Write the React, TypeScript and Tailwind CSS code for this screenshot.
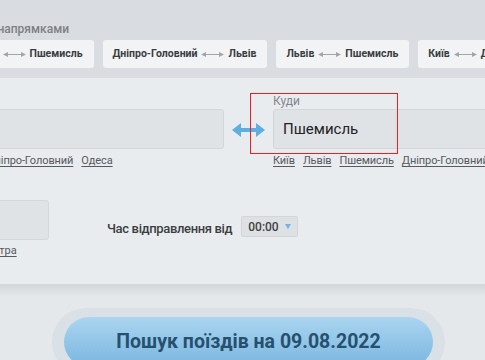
import React from "react";

const popular = [
  ["Київ", "Пшемисль"],
  ["Дніпро-Головний", "Львів"],
  ["Львів", "Пшемисль"],
  ["Київ", "Дніпро-Головний"],
];

const fromLinks = ["Київ", "Львів", "Дніпро-Головний", "Одеса"];
const toLinks = ["Київ", "Львів", "Пшемисль", "Дніпро-Головний"];

function ThinArrows() {
  return (
    <svg width="23" height="7" viewBox="0 0 23 7" className="shrink-0">
      <line x1="3" y1="3.5" x2="20" y2="3.5" stroke="#a3a6a9" strokeWidth="1" />
      <polygon points="0,3.5 5,1 5,6" fill="#a3a6a9" />
      <polygon points="23,3.5 18,1 18,6" fill="#a3a6a9" />
    </svg>
  );
}

function SwapArrows() {
  return (
    <svg width="33" height="14" viewBox="0 0 33 14">
      <rect x="7" y="5" width="19" height="4" fill="#5eaee0" />
      <polygon points="0,7 9,0 9,14" fill="#5eaee0" />
      <polygon points="33,7 24,0 24,14" fill="#5eaee0" />
    </svg>
  );
}

function CityLinks({ items }: { items: string[] }) {
  return (
    <div className="mt-[4px] flex gap-[8px] text-[11px] leading-[16px] tracking-[-0.1px] text-[#555a5e] whitespace-nowrap">
      {items.map((c) => (
        <a key={c} className="underline underline-offset-2">{c}</a>
      ))}
    </div>
  );
}

export default function App() {
  return (
    <div className="relative w-[485px] h-[360px] overflow-hidden bg-[#e5e8eb] font-['Roboto','Liberation_Sans',sans-serif]">
      {/* Popular routes */}
      <section className="h-[78px] bg-[#d9dce0] pt-[21px] whitespace-nowrap">
        <p className="-ml-[181px] w-[250px] text-right text-[12px] leading-[16px] font-medium text-[#7d8084]">
          Популярні за напрямками
        </p>
        <div className="mt-[3px] -ml-[33px] flex gap-[9px]">
          {popular.map(([a, b]) => (
            <div
              key={a + b}
              className="h-[28px] shrink-0 flex items-center gap-[4px] rounded-[3px] bg-[#f1f3f5] pl-[10px] pr-[11px] text-[10.5px] font-bold text-[#3a3d40]"
            >
              <span>{a}</span>
              <ThinArrows />
              <span>{b}</span>
            </div>
          ))}
        </div>
      </section>

      {/* Search form */}
      <section className="h-[206px] bg-[#e9ecef] pt-[16px] whitespace-nowrap">
        <div className="flex items-start">
          <div className="-ml-[80px] w-[304px] shrink-0">
            <p className="text-[12px] leading-[14px] text-[#85888b]">Звідки</p>
            <div className="mt-[1px] h-[40px] rounded-[3px] border border-[#d4d7da] bg-[#e0e3e6]" />
            <CityLinks items={fromLinks} />
          </div>
          <div className="w-[49px] shrink-0 flex justify-center pt-[29px]">
            <SwapArrows />
          </div>
          <div className="w-[260px] shrink-0">
            <p className="text-[12px] leading-[14px] text-[#85888b]">Куди</p>
            <div className="mt-[1px] h-[40px] flex items-center rounded-[3px] border border-[#d4d7da] bg-[#e0e3e6] px-[9px] text-[15px] text-[#222]">
              Пшемисль
            </div>
            <CityLinks items={toLinks} />
          </div>
        </div>

        <div className="mt-[31px] flex items-start">
          <div className="-ml-[74px] w-[123px] shrink-0">
            <div className="h-[40px] rounded-[3px] border border-[#d4d7da] bg-[#e0e3e6]" />
            <div className="mt-[3px] flex gap-[9px] text-[11px] leading-[16px] text-[#555a5e]">
              <a className="underline underline-offset-2">Сьогодні</a>
              <a className="underline underline-offset-2">Завтра</a>
            </div>
          </div>
          <p className="ml-[58px] mt-[21px] text-[13px] leading-[16px] font-medium tracking-[-0.35px] text-[#3b3e41]">
            Час відправлення від
          </p>
          <div className="ml-[9px] mt-[16px] h-[21px] flex items-center gap-[6px] rounded-[2px] border border-[#d3d6d9] bg-[#dee1e4] pl-[6px] pr-[6px] text-[12px] font-medium text-[#3f4245]">
            <span>00:00</span>
            <svg width="6" height="5" viewBox="0 0 6 5">
              <polygon points="0,0 6,0 3,5" fill="#74b4de" />
            </svg>
          </div>
        </div>
      </section>

      {/* Submit */}
      <div className="h-[12px] bg-gradient-to-b from-[#d3d6d9] to-[#e5e8eb]" />
      <div className="mt-[12px] ml-[52px] w-[393px] rounded-full bg-[#d9e0e6] px-[12px] pt-[9px] pb-[9px]">
        <button className="h-[50px] w-full rounded-full bg-gradient-to-b from-[#aad5f0] to-[#79b6df] text-[19.5px] font-bold text-[#27506f]">
          Пошук поїздів на 09.08.2022
        </button>
      </div>

      {/* Highlight */}
      <div className="absolute left-[250px] top-[93px] h-[61px] w-[148px] border border-[#ee1c25]" />
    </div>
  );
}
